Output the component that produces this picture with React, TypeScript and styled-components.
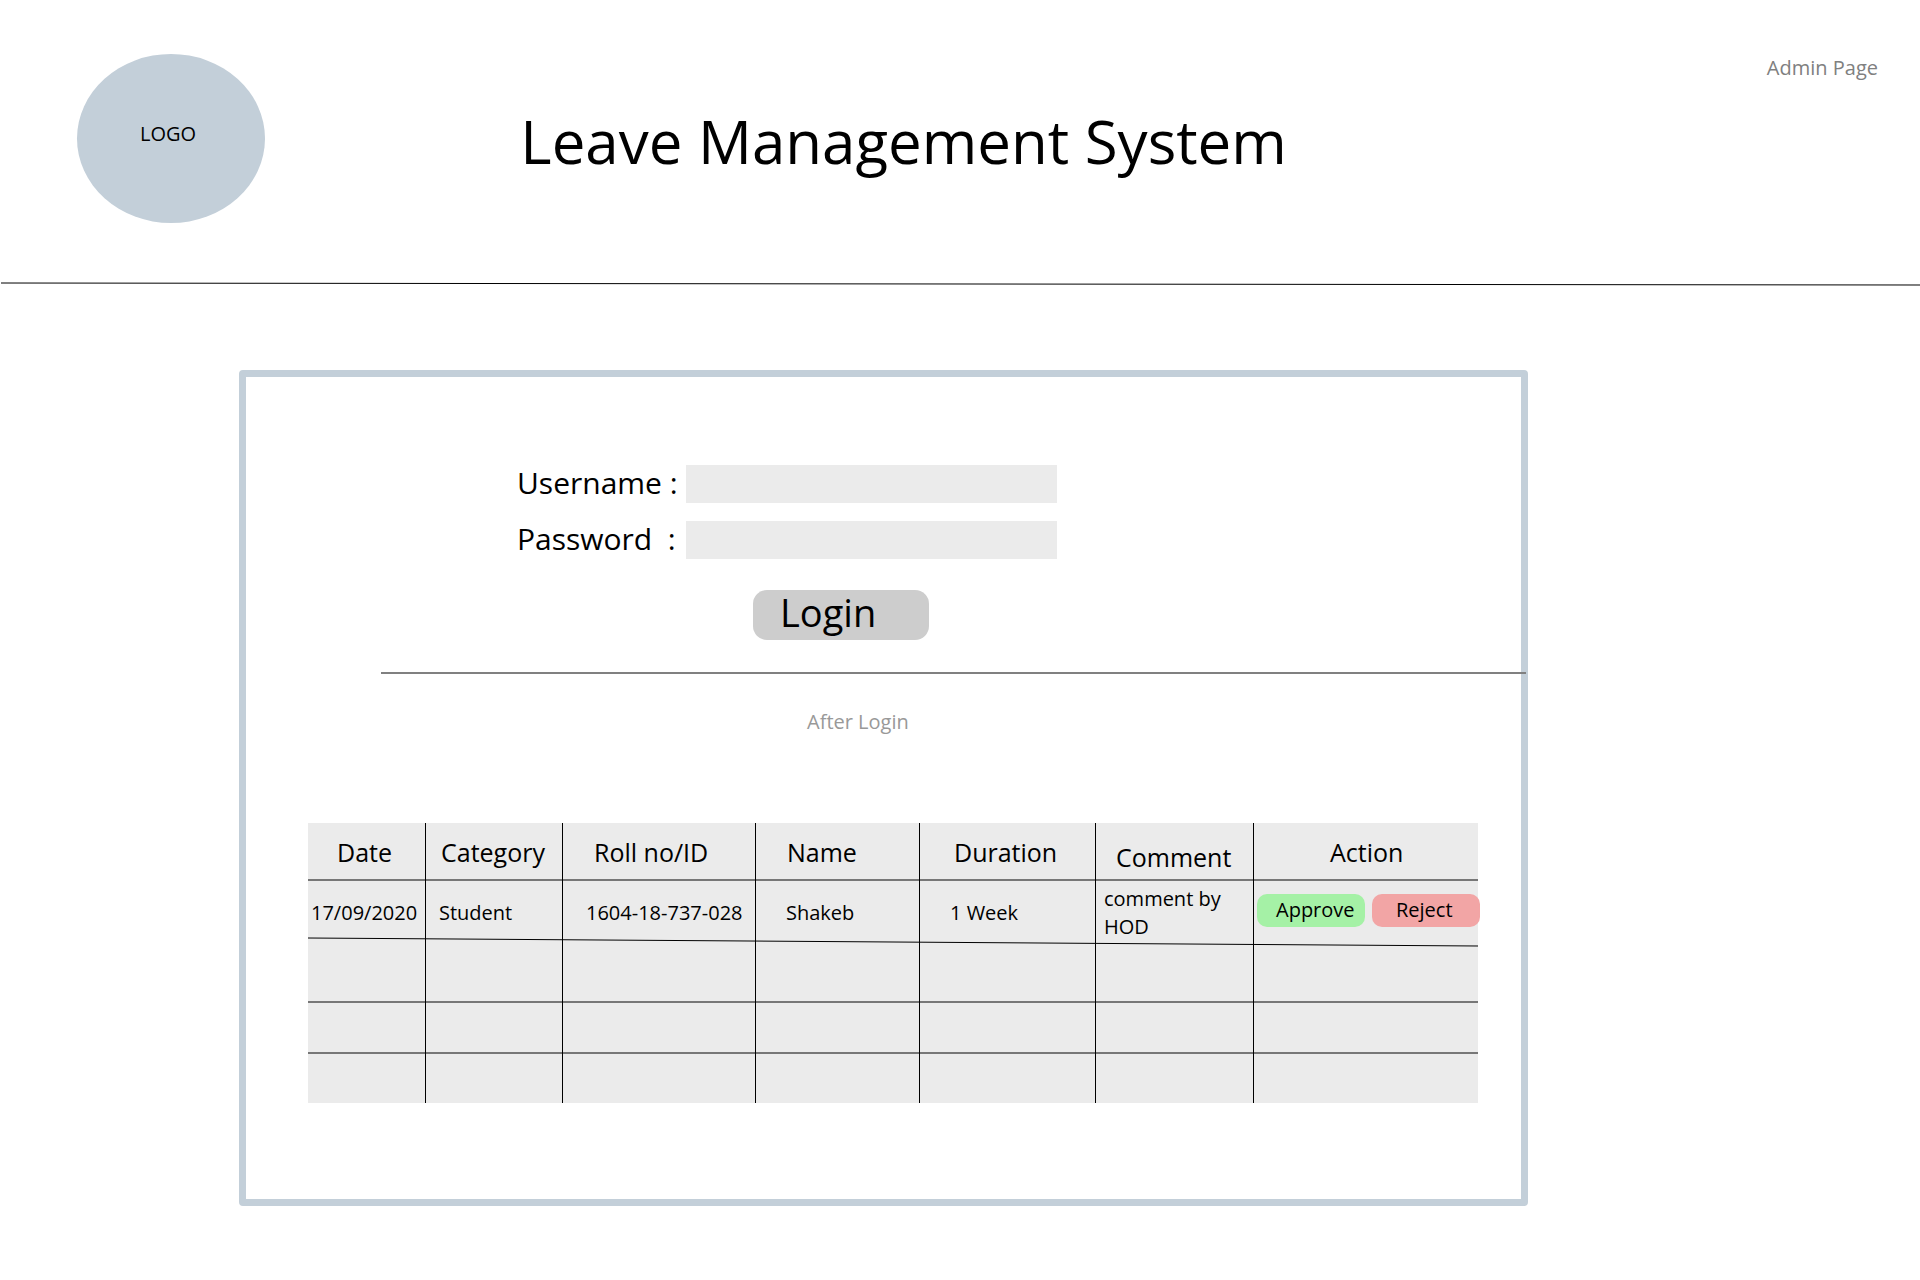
import React from "react";
import styled, { createGlobalStyle } from "styled-components";

const GlobalStyle = createGlobalStyle`
  *, *::before, *::after { box-sizing: border-box; }
  body {
    margin: 0;
    background: #fff;
    color: #000;
    font-family: "Open Sans", "Noto Sans", sans-serif;
    font-size: 20px;
    line-height: 28px;
  }
  button, input { font: inherit; color: inherit; border: 0; margin: 0; }
`;

const Header = styled.header`
  display: grid;
  grid-template-columns: 188px 1fr auto;
  align-items: center;
  padding: 54px 42px 59px 77px;
`;

const Logo = styled.div`
  display: flex;
  align-items: center;
  justify-content: center;
  height: 169px;
  padding: 0 6px 10px 0;
  border-radius: 50%;
  background: #c3cfd9;
`;

const Title = styled.h1`
  margin: 0;
  padding: 4px 0 0 13.3vw;
  font-size: 60px;
  font-weight: 400;
  line-height: 82px;
`;

const PageName = styled.p`
  align-self: start;
  margin: 0;
  color: #808080;
`;

const HeaderRule = styled.svg`
  display: block;
  width: 100%;
  height: 4px;
`;

const Main = styled.main`
  display: grid;
  grid-template-columns: 239fr 1289fr 392fr;
  padding: 84px 0 64px;
`;

const Panel = styled.section`
  grid-column: 2;
  min-width: 0;
  padding: 88px 0 96px;
  border: 7px solid #c3cfd9;
  border-radius: 4px;
`;

const LoginForm = styled.form`
  display: grid;
  grid-template-columns: 169px minmax(0, 371px);
  row-gap: 18px;
  margin-left: 271px;
`;

const FieldLabel = styled.label`
  font-size: 30px;
  line-height: 36px;
  white-space: pre;
`;

const Field = styled.input`
  width: 100%;
  height: 38px;
  padding: 0 8px;
  background: #ebebeb;
`;

const LoginButton = styled.button`
  grid-column: 1 / -1;
  width: 176px;
  height: 50px;
  margin: 13px 0 0 236px;
  padding: 0 0 6px 27px;
  border-radius: 14px;
  background: #cdcdcd;
  font-size: 38px;
  line-height: 44px;
  text-align: left;
`;

const Divider = styled.hr`
  height: 2px;
  margin: 32px -5px 0 135px;
  border: 0;
  background: #808080;
`;

const StageNote = styled.p`
  margin: 34px 0 87px 44%;
  color: #999;
`;

const TableArea = styled.div`
  position: relative;
  margin: 0 43px 0 62px;
`;

const Table = styled.table`
  width: 100%;
  table-layout: fixed;
  border-spacing: 0;
  background: #ebebeb;
`;

const Column = styled.col<{ $width: number }>`
  width: ${(p) => p.$width}px;
`;

const Row = styled.tr<{ $height: number; $ruled?: boolean }>`
  height: ${(p) => p.$height}px;

  > * {
    box-shadow: ${(p) => (p.$ruled ? "inset 0 -2px #777" : "none")};
  }
  > * + * {
    border-left: 1px solid #000;
  }
`;

const HeadCell = styled.th<{ $indent: number; $low?: boolean }>`
  padding: 6px 0 6px ${(p) => p.$indent}px;
  font-size: 25px;
  font-weight: 400;
  line-height: 35px;
  text-align: left;
  vertical-align: ${(p) => (p.$low ? "bottom" : "middle")};
  white-space: nowrap;
`;

const Cell = styled.td<{ $indent?: number }>`
  padding: 0 0 0 ${(p) => p.$indent ?? 0}px;
  vertical-align: middle;
`;

const Actions = styled.div`
  display: flex;
  gap: 7px;
  padding-bottom: 6px;
`;

const ActionButton = styled.button<{ $tone: string; $inset: number }>`
  flex: 0 0 108px;
  height: 33px;
  padding: 0 0 0 ${(p) => p.$inset}px;
  border-radius: 10px;
  background: ${(p) => p.$tone};
  text-align: left;
`;

/* Hand-drawn rule that slopes down across the first record */
const SlopedRule = styled.svg`
  position: absolute;
  top: 114px;
  left: 0;
  width: 100%;
  height: 10px;
  pointer-events: none;
`;

const columns = [
  { name: "Date", width: 117, indent: 29 },
  { name: "Category", width: 137, indent: 15 },
  { name: "Roll no/ID", width: 193, indent: 31 },
  { name: "Name", width: 164, indent: 31 },
  { name: "Duration", width: 176, indent: 34 },
  { name: "Comment", width: 158, indent: 20, low: true },
  { name: "Action", width: 225, indent: 76 },
];

const record = [
  { text: "17/09/2020", indent: 3 },
  { text: "Student", indent: 13 },
  { text: "1604-18-737-028", indent: 23 },
  { text: "Shakeb", indent: 30 },
  { text: "1 Week", indent: 30 },
  { text: "comment by HOD", indent: 8 },
];

const emptyRows = [
  { height: 58, ruled: true },
  { height: 51, ruled: true },
  { height: 49, ruled: false },
];

export default function App() {
  return (
    <>
      <GlobalStyle />
      <Header>
        <Logo>LOGO</Logo>
        <Title>Leave Management System</Title>
        <PageName>Admin Page</PageName>
      </Header>
      <HeaderRule viewBox="0 0 1920 4" preserveAspectRatio="none" aria-hidden="true">
        <line x1="1" y1="1" x2="1920" y2="3" stroke="#000" />
      </HeaderRule>
      <Main>
        <Panel>
          <LoginForm onSubmit={(e) => e.preventDefault()}>
            <FieldLabel htmlFor="username">Username :</FieldLabel>
            <Field id="username" type="text" autoComplete="username" />
            <FieldLabel htmlFor="password">{"Password  :"}</FieldLabel>
            <Field id="password" type="password" autoComplete="current-password" />
            <LoginButton type="submit">Login</LoginButton>
          </LoginForm>
          <Divider />
          <StageNote>After Login</StageNote>
          <TableArea>
            <Table>
              <colgroup>
                {columns.map((c) => (
                  <Column key={c.name} $width={c.width} />
                ))}
              </colgroup>
              <thead>
                <Row $height={58} $ruled>
                  {columns.map((c) => (
                    <HeadCell key={c.name} scope="col" $indent={c.indent} $low={c.low}>
                      {c.name}
                    </HeadCell>
                  ))}
                </Row>
              </thead>
              <tbody>
                <Row $height={64}>
                  {record.map((c) => (
                    <Cell key={c.text} $indent={c.indent}>
                      {c.text}
                    </Cell>
                  ))}
                  <Cell $indent={3}>
                    <Actions>
                      <ActionButton type="button" $tone="#a5f1a6" $inset={19}>
                        Approve
                      </ActionButton>
                      <ActionButton type="button" $tone="#f2a5a5" $inset={24}>
                        Reject
                      </ActionButton>
                    </Actions>
                  </Cell>
                </Row>
                {emptyRows.map((r) => (
                  <Row key={r.height} $height={r.height} $ruled={r.ruled}>
                    {columns.map((c) => (
                      <Cell key={c.name} />
                    ))}
                  </Row>
                ))}
              </tbody>
            </Table>
            <SlopedRule viewBox="0 0 1170 10" preserveAspectRatio="none" aria-hidden="true">
              <line x1="0" y1="1" x2="1170" y2="9" stroke="#000" />
            </SlopedRule>
          </TableArea>
        </Panel>
      </Main>
    </>
  );
}
